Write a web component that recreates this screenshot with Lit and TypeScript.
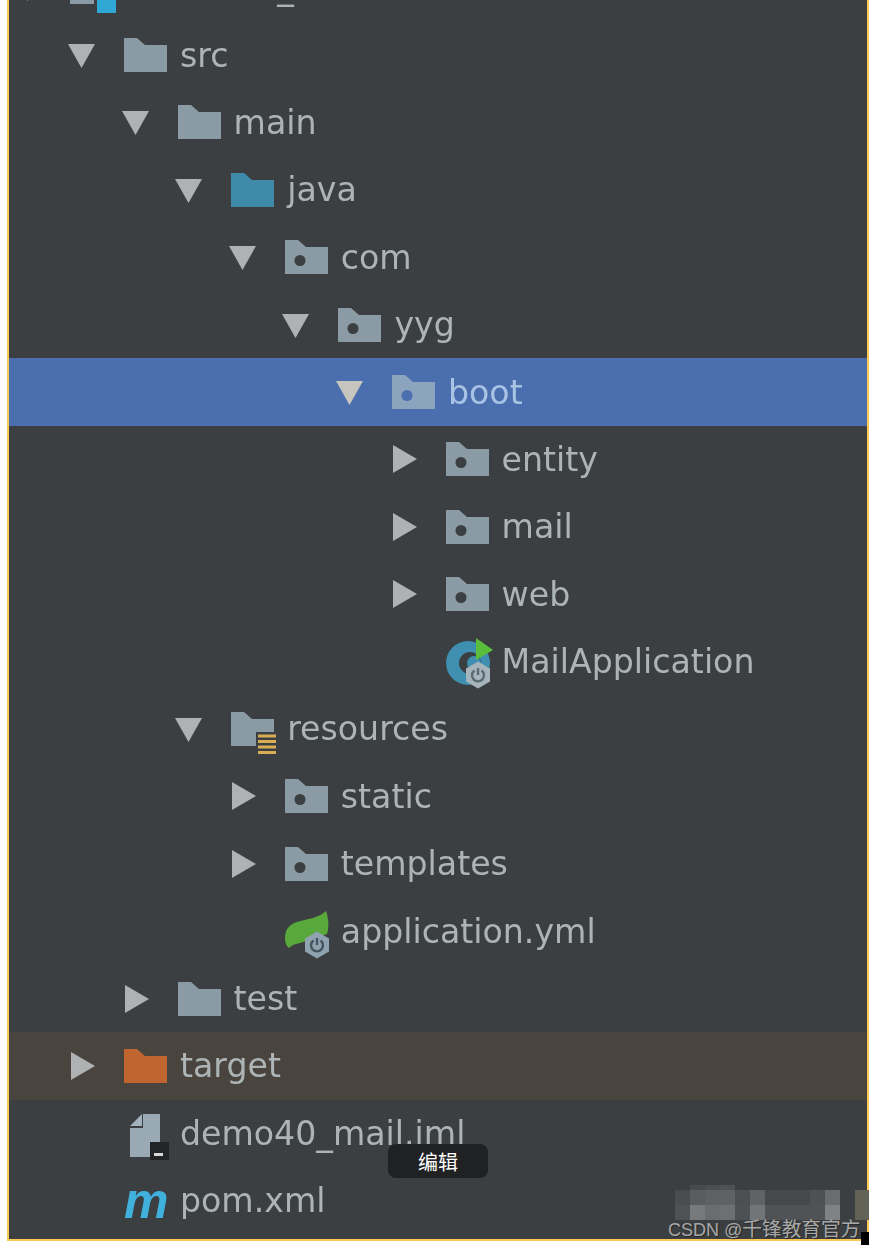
import { LitElement, html, css, svg } from 'lit';
import { customElement } from 'lit/decorators.js';

type Row = {
  label: string;
  depth: number;
  arrow?: 'down' | 'right';
  icon: string;
  kind?: string;
};

const ROWS: Row[] = [
  { label: 'demo40_mail', depth: 0, arrow: 'down', icon: 'module', kind: 'module' },
  { label: 'src', depth: 1, arrow: 'down', icon: 'folder' },
  { label: 'main', depth: 2, arrow: 'down', icon: 'folder' },
  { label: 'java', depth: 3, arrow: 'down', icon: 'source' },
  { label: 'com', depth: 4, arrow: 'down', icon: 'package' },
  { label: 'yyg', depth: 5, arrow: 'down', icon: 'package' },
  { label: 'boot', depth: 6, arrow: 'down', icon: 'package', kind: 'selected' },
  { label: 'entity', depth: 7, arrow: 'right', icon: 'package' },
  { label: 'mail', depth: 7, arrow: 'right', icon: 'package' },
  { label: 'web', depth: 7, arrow: 'right', icon: 'package' },
  { label: 'MailApplication', depth: 7, icon: 'spring-class' },
  { label: 'resources', depth: 3, arrow: 'down', icon: 'resources' },
  { label: 'static', depth: 4, arrow: 'right', icon: 'package' },
  { label: 'templates', depth: 4, arrow: 'right', icon: 'package' },
  { label: 'application.yml', depth: 4, icon: 'leaf' },
  { label: 'test', depth: 2, arrow: 'right', icon: 'folder' },
  { label: 'target', depth: 1, arrow: 'right', icon: 'excluded', kind: 'ignored' },
  { label: 'demo40_mail.iml', depth: 1, icon: 'iml' },
  { label: 'pom.xml', depth: 1, icon: 'maven' },
];

// the mosaic smudge above the watermark, 15px cells, first row is only a 5px sliver
const MOSAIC = [
  ['', '#484b4d', '#4c4f52', '#4f5254', '', '', '', '', '', '', '', '', ''],
  ['#4a4d4f', '#5a5d60', '#5e6164', '#5f6265', '#4c4f51', '#606366', '#46494b', '#46494b', '#46494b', '#4e5153', '#6a6d70', '', '#636257'],
  ['#4f5254', '#777a7d', '#6a6d70', '#6d7073', '#4e5153', '#727578', '#505356', '#505356', '#505356', '#505356', '#808386', '', '#636257'],
];

const FOLDER = 'M0 0H13L21 7H43V34H0Z';

// spring boot badge: hexagon with a power sign
const badge = (x: number, y: number, body: string, mark: string) => svg`
  <path d="M${x} ${y - 13.5}l12 7v13l-12 7l-12 -7v-13Z" fill=${body} />
  <path d="M${x - 3.5} ${y - 4.5}a6 6 0 1 0 7 0" fill="none" stroke=${mark} stroke-width="2.4" />
  <path d="M${x} ${y - 7}v7" stroke=${mark} stroke-width="2.4" />
`;

const icons: Record<string, unknown> = {
  folder: svg`<path d=${FOLDER} class="fold" />`,
  source: svg`<path d=${FOLDER} fill="#3e8aa8" />`,
  excluded: svg`<path d=${FOLDER} fill="#c0652d" />`,
  package: svg`<path d=${FOLDER} class="fold" /><circle cx="15" cy="20.5" r="5.5" class="dot" />`,
  module: svg`<rect x="0" y="0" width="24" height="33" class="fold" /><rect x="27" y="8" width="19" height="34" fill="#2fa8d5" />`,
  resources: svg`
    <path d=${FOLDER} class="fold" />
    <rect x="25" y="20" width="21" height="25" fill="#3c3f41" />
    <path d="M27 24H45M27 29.5H45M27 35H45M27 40.5H45" stroke="#d9ae55" stroke-width="3" />
  `,
  'spring-class': svg`
    <circle cx="22" cy="18" r="22" fill="#3e8fb0" />
    <circle cx="24" cy="18" r="11" fill="#3c3f41" />
    <circle cx="28" cy="18" r="7" fill="#3e8fb0" />
    <path d="M30 -7L47 5L30 15Z" fill="#5bbd3c" />
    ${badge(32, 30, '#a6b4bc', '#5c6a72')}
  `,
  leaf: svg`
    <path d="M0 24C0 14 6 10 12 8C20 5 32 5 41 -3C44 6 44 14 42 20L18 28C12 30 8 30 4 34C1 32 0 28 0 24Z" fill="#58a83c" />
    ${badge(32, 31, '#8fa2af', '#45535c')}
  `,
  iml: svg`
    <path d="M6 10L18 -2V10Z" fill="#a3b3bd" />
    <path d="M19 -2H36V26H26V41H6V12H19Z" fill="#9aaab4" />
    <rect x="26" y="26" width="19" height="18" fill="#232425" />
    <rect x="30" y="37" width="9" height="3" fill="#d8d8d8" />
  `,
};

@customElement('app-root')
export class AppRoot extends LitElement {
  static styles = css`
    :host {
      display: block;
      width: 876px;
      height: 1248px;
      background: #fff;
      position: relative;
      overflow: hidden;
    }
    .frame {
      box-sizing: border-box;
      margin-left: 7px;
      width: 862px;
      height: 1241px;
      background: #3c3f41;
      border: solid #fcc954;
      border-width: 0 2px 2px;
      overflow: hidden;
    }
    .tree {
      margin-top: -46px;
      filter: blur(0.7px);
    }
    .row {
      box-sizing: border-box;
      height: 67.4px;
      display: flex;
      align-items: center;
      color: #adb4b6;
      font: 33.2px 'DejaVu Sans', 'Liberation Sans', sans-serif;
      white-space: nowrap;
    }
    .row.module span:last-child {
      margin-left: 12px;
      letter-spacing: 0.4px;
    }
    .fold {
      fill: #8b9ba5;
    }
    .dot {
      fill: #3c3f41;
    }
    .tri {
      fill: #afb1b3;
    }
    .row.selected {
      background: #4b6eaf;
      color: #a9c3e4;
    }
    .row.selected .fold {
      fill: #8ca3bd;
    }
    .row.selected .dot {
      fill: #4b6eaf;
    }
    .row.selected .tri {
      fill: #c6c6be;
    }
    .row.ignored {
      background: #49443d;
    }
    .arrow {
      flex: none;
      width: 27px;
      height: 28px;
      margin-right: 29px;
    }
    .glyph {
      flex: none;
      width: 42px;
      height: 34px;
      margin-right: 14px;
      overflow: visible;
    }
    .maven {
      flex: none;
      width: 42px;
      margin-right: 14px;
      color: #3fb1dc;
      font: italic bold 50px/34px 'Liberation Sans', sans-serif;
    }
    .tip {
      position: absolute;
      left: 388px;
      top: 1144px;
      width: 100px;
      height: 34px;
      border-radius: 8px;
      background: #1f2123;
      color: #fff;
      display: flex;
      align-items: center;
      justify-content: center;
      font: 20px 'Noto Sans CJK SC', sans-serif;
    }
    .mosaic {
      position: absolute;
      left: 675px;
      top: 1185px;
      display: grid;
      grid-template-columns: repeat(12, 15px) 14px;
      grid-template-rows: 5px 15px 15px;
    }
    .mark {
      position: absolute;
      left: 668px;
      top: 1216px;
      color: #a8a8a8;
      font: 18px/24px 'Liberation Sans', sans-serif;
      text-shadow: 1px 1px 1px #26282a;
      white-space: nowrap;
    }
    .mark span {
      font: 19.7px/24px 'Noto Sans CJK SC', sans-serif;
    }
    .corner {
      position: absolute;
      left: 861px;
      top: 1232px;
      width: 8px;
      height: 13px;
      background: #000;
    }
  `;

  private arrow(dir?: string) {
    if (!dir) return html`<span class="arrow"></span>`;
    return html`<svg class="arrow" viewBox="0 0 27 28">
      <path d=${dir === 'down' ? 'M0 3H27L13.5 27Z' : 'M3 0L27 14L3 28Z'} class="tri" />
    </svg>`;
  }

  private icon(name: string) {
    if (name === 'maven') return html`<span class="maven">m</span>`;
    return html`<svg class="glyph" viewBox="0 0 42 34">${icons[name]}</svg>`;
  }

  render() {
    return html`
      <div class="frame">
        <div class="tree">
          ${ROWS.map(
            (r) => html`
              <div class="row ${r.kind ?? ''}" style="padding-left:${5.4 + 53.6 * r.depth}px">
                ${this.arrow(r.arrow)}${this.icon(r.icon)}<span>${r.label}</span>
              </div>
            `
          )}
        </div>
      </div>
      <div class="mosaic">
        ${MOSAIC.flat().map((c) => html`<i style="background:${c || 'transparent'}"></i>`)}
      </div>
      <div class="tip">编辑</div>
      <div class="mark">CSDN @<span>千锋教育官方</span></div>
      <div class="corner"></div>
    `;
  }
}
